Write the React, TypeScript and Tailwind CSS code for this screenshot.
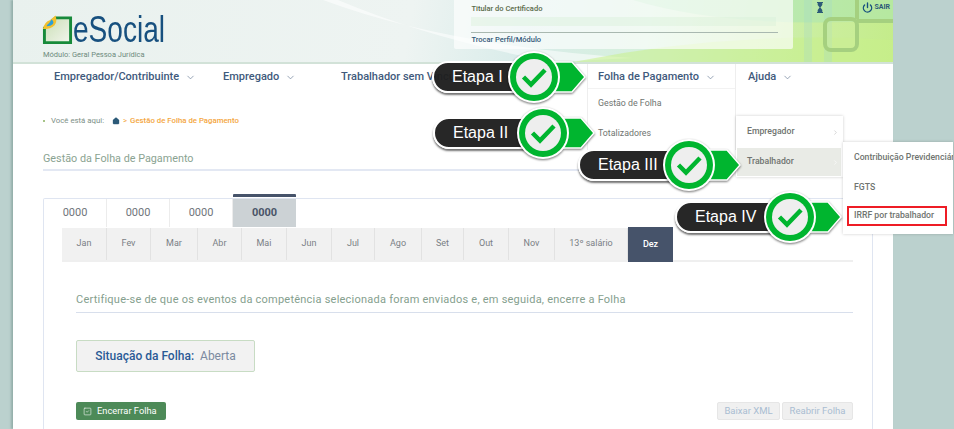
import React from 'react';
import { ChevronDown, ChevronRight, Power, House, SquareCheck } from 'lucide-react';

const roboto = 'font-["Roboto",sans-serif]';

const navItems = [
  { label: 'Empregador/Contribuinte', width: 'w-[169px]' },
  { label: 'Empregado', width: 'w-[118px]' },
  { label: 'Trabalhador sem Vínculo', width: 'w-[257px]' },
  { label: 'Folha de Pagamento', width: 'w-[150px]' },
  { label: 'Ajuda', width: 'w-[60px]' },
];

const years = ['0000', '0000', '0000'];
const months = [
  { label: 'Jan', width: 'w-[45px]' },
  { label: 'Fev', width: 'w-[44px]' },
  { label: 'Mar', width: 'w-[47px]' },
  { label: 'Abr', width: 'w-[44px]' },
  { label: 'Mai', width: 'w-[45px]' },
  { label: 'Jun', width: 'w-[45px]' },
  { label: 'Jul', width: 'w-[43px]' },
  { label: 'Ago', width: 'w-[47px]' },
  { label: 'Set', width: 'w-[42px]' },
  { label: 'Out', width: 'w-[45px]' },
  { label: 'Nov', width: 'w-[46px]' },
  { label: '13º salário', width: 'w-[73px]' },
];

function Logo() {
  return (
    <div className="flex items-end h-[30px]">
      <svg width="31" height="30" viewBox="0 0 32 30" className="shrink-0">
        <defs>
          <linearGradient id="sheet" x1="0" y1="0" x2="1" y2="1">
            <stop offset="0" stopColor="#c9deb4" />
            <stop offset="1" stopColor="#f2f6ee" />
          </linearGradient>
        </defs>
        <path d="M2.5 13 L14 2.5 H29.5 V28 H2.5 Z" fill="url(#sheet)" stroke="#178a3a" strokeWidth="3" />
        <path d="M1 14 Q3 6 8 5 L14 0 Q16 6 13 10 Q9 14 1 14 Z" fill="#f2c12e" />
        <path d="M5 10 Q8 8 10 4 Q13 7 11 9 Q9 11 5 11 Z" fill="#2b9fd8" />
      </svg>
      <span className='inline-block font-["Liberation_Sans",sans-serif] text-[#17507f] text-[36px] leading-[30px] scale-x-[0.78] origin-left'>eSocial</span>
    </div>
  );
}

// faixa preta com o selo verde de check e a seta apontando pro menu
function Callout({ label, pos, pillW }: { label: string; pos: string; pillW: string }) {
  return (
    <div className={`absolute ${pos} flex items-center h-[56px]`}>
      <div className={`${pillW} h-[32px] rounded-l-[16px] rounded-r-[4px] bg-[#1e1e1e]/[0.96] border-2 border-white shadow-[0_2px_2px_rgba(0,0,0,0.55)] flex items-center pl-[18px] font-["Liberation_Sans",sans-serif] text-white text-[16px] -mr-[16px] shrink-0`}>
        {label}
      </div>
      <svg width="78" height="56" viewBox="0 0 78 56" className="relative shrink-0 drop-shadow-[0_1px_1px_rgba(0,0,0,0.55)]">
        <path d="M38 13 L64 13 L77 28 L64 43 L38 43 Z" fill="#00b52f" stroke="#ffffff" strokeWidth="1.5" />
        <circle cx="26" cy="28" r="26" fill="#ffffff" />
        <circle cx="26" cy="28" r="24" fill="#00b52f" />
        <circle cx="26" cy="28" r="18" fill="#eeeeee" />
        <path d="M15.5 28 L23 35.5 L37 21" fill="none" stroke="#00b52f" strokeWidth="4.5" strokeLinejoin="miter" />
      </svg>
    </div>
  );
}

export default function App() {
  return (
    <div className={`${roboto} relative w-[954px] h-[429px] overflow-hidden bg-[#bbd1ce]`}>
      <div className="relative ml-[13px] w-[880px] h-[429px] bg-white shadow-[-2px_0_2px_rgba(120,150,145,0.6)]">
        {/* Header */}
        <header className="relative h-[64px] border-b-2 border-[#d2e2d8] overflow-hidden bg-[linear-gradient(100deg,#e9f1ee_0%,#eef4f2_45%,#d9ecea_58%,#d6f0dc_72%,#c9ee9a_92%,#c4ec8a_100%)] flex justify-between">
          <svg width="880" height="64" viewBox="0 0 880 64" className="absolute left-0 top-0">
            <path d="M310 0 Q430 45 620 58 L540 62 Q420 40 325 0 Z" fill="#ffffff" opacity="0.55" />
            <path d="M620 0 Q720 30 880 20 L880 0 Z" fill="#a7e3b4" opacity="0.5" />
            <path d="M560 62 Q720 30 880 40 L880 62 Z" fill="#c8f08a" opacity="0.55" />
            <path d="M795 0 L795 64 M815 0 L815 64" stroke="#9fd6d0" strokeWidth="8" opacity="0.25" />
            <rect x="812" y="19" width="32" height="31" rx="6" fill="#cfeea0" fillOpacity="0.35" stroke="#a5d07f" strokeWidth="4" />
            <path d="M844 21 H880 M844 0 V19" stroke="#a5d07f" strokeWidth="4" fill="none" />
          </svg>
          <div className="relative ml-[29px] mt-[15px] flex flex-col">
            <Logo />
            <span className="ml-[1px] mt-[6px] text-[7.5px] leading-[8px] text-[#6d8a7c]">Módulo: Geral Pessoa Jurídica</span>
          </div>
          <div className="relative flex items-start mr-[3px]">
            <div className="w-[339px] h-[49px] bg-white/65 rounded-b-[2px] px-[17px] pt-[4px] mr-[24px]">
              <p className="text-[7.5px] leading-[9px] font-medium text-[#5a6b4a]">Titular do Certificado</p>
              <div className="mt-[4px] h-[9px] bg-[#d8f0d8]/40" />
              <div className="mt-[6px] h-px w-[307px] bg-[#a9b8b0]" />
              <p className="mt-[2px] text-[7.5px] leading-[9px] font-medium text-[#345a7a]">Trocar Perfil/Módulo</p>
            </div>
            <svg width="6" height="11" viewBox="0 0 6 11" className="mt-[2px] mr-[39px]">
              <path d="M0 0.5 H6 M0 10.5 H6" stroke="#2c5a78" strokeWidth="1" />
              <path d="M0.7 1 H5.3 V3 L3.4 5.5 L5.3 8 V10 H0.7 V8 L2.6 5.5 L0.7 3 Z" fill="#2c5a78" />
            </svg>
            <div className="flex items-center mt-[2px] gap-[1px]">
              <Power size={11} strokeWidth={3} className="text-[#17507f]" />
              <span className="text-[7px] font-bold text-[#2c5a78]">SAIR</span>
            </div>
          </div>
        </header>

        {/* Nav */}
        <nav className="flex h-[27px] pl-[41px] items-center">
          {navItems.map((item) => (
            <div key={item.label} className={`${item.width} flex items-center gap-[6px] shrink-0 text-[11px] font-medium text-[#3f5a7c]`}>
              <span>{item.label}</span>
              <ChevronDown size={11} strokeWidth={1.5} className="text-[#6b7d96]" />
            </div>
          ))}
        </nav>

        {/* Breadcrumb */}
        <div className="flex items-center mt-[23px] pl-[30px] h-[14px] text-[7.8px]">
          <span className="w-[2px] h-[2px] rounded-full bg-[#8ab060]" />
          <span className="ml-[6px] text-[#7d8f86]">Você está aqui:</span>
          <House size={8} fill="#2c5a78" strokeWidth={1} className="ml-[8px] text-[#2c5a78]" />
          <span className="mx-[3px] text-[#f4a640]">&gt;</span>
          <span className="text-[#f4a640] font-medium">Gestão de Folha de Pagamento</span>
        </div>

        <div className="ml-[30px] mr-[20px] mt-[24px]">
          <h1 className="text-[10.8px] leading-[14px] text-[#8aa391]">Gestão da Folha de Pagamento</h1>
          <div className="mt-[3px] h-[2px] bg-[#e3e8f3]" />

          {/* Painel de competência */}
          <div className="relative mt-[27px] h-[300px] border border-b-0 border-[#dfe5f1] rounded-t-[2px]">
            <div className="flex h-[28px]">
              {years.map((y, i) => (
                <div key={i} className="w-[63px] flex items-center justify-center border-r border-[#ececec] text-[11px] text-[#70757a]">{y}</div>
              ))}
              <div className="relative w-[63px] flex items-center justify-center bg-[#ccd2d5] text-[11px] font-bold text-[#4a5568]">
                0000
                <div className="absolute -top-[5px] left-0 right-0 h-[3px] bg-[#46536a] rounded-t-[1px]" />
              </div>
            </div>

            <div className="ml-[18px] mr-[19px] mt-[1px] border-b-2 border-[#efefef] flex h-[34px]">
              {months.map((m) => (
                <div key={m.label} className={`${m.width} h-[32px] flex items-center justify-center bg-[#f1f1f1] border-r border-[#e2e2e2] text-[9px] text-[#7a7f85] shrink-0`}>{m.label}</div>
              ))}
              <div className="w-[45px] h-[35px] -mt-[1px] flex items-center justify-center bg-[#46536a] text-[9px] font-medium text-white shrink-0">Dez</div>
            </div>

            <div className="ml-[32px] mr-[19px] mt-[31px]">
              <p className="text-[11px] leading-[14px] text-[#85a08e] tracking-[0.23px]">Certifique-se de que os eventos da competência selecionada foram enviados e, em seguida, encerre a Folha</p>
              <div className="mt-[5px] h-px bg-[#d8dfec]" />

              <div className="mt-[27px] w-[179px] h-[32px] flex items-center justify-center gap-[6px] bg-[#f2f2f2] border border-[#c8dcc4] rounded-[2px] text-[12px]">
                <span className="font-medium text-[#2a5a96]">Situação da Folha:</span>
                <span className="text-[#7b8aa0]">Aberta</span>
              </div>

              <div className="mt-[30px] flex items-center justify-between">
                <button className="w-[90px] h-[18px] flex items-center pl-[7px] gap-[5px] bg-[#4d8a58] rounded-[2px] text-[9.3px] text-white">
                  <SquareCheck size={9} strokeWidth={1.5} />
                  Encerrar Folha
                </button>
                <div className="flex gap-[2px]">
                  <button className="w-[63px] h-[18px] bg-[#f0f0f0] border border-[#e6e6e6] rounded-[2px] text-[9.5px] text-[#a9bdd2]">Baixar XML</button>
                  <button className="w-[71px] h-[18px] bg-[#f0f0f0] border border-[#e6e6e6] rounded-[2px] text-[9.5px] text-[#a9bdd2]">Reabrir Folha</button>
                </div>
              </div>
            </div>
          </div>
        </div>

        {/* Menus abertos */}
        <div className="absolute left-[574px] top-[64px] w-[149px] h-[86px] border-x border-[#eeeeee] text-[8.8px] text-[#6f7470]">
          <div className="h-[25px] border-b border-[#f2f2f2]" />
          <div className="pl-[10px] pt-[8px] leading-[12px]">Gestão de Folha</div>
          <div className="pl-[10px] pt-[18px] leading-[12px]">Totalizadores</div>
        </div>
        <div className="absolute left-[723px] top-[116px] w-[107px] h-[61px] bg-white shadow-[0_0_3px_rgba(0,0,0,0.2)] text-[8.7px] font-medium text-[#6f7470] flex flex-col">
          <div className="h-[32px] pl-[11px] pr-[4px] flex items-center justify-between">Empregador <ChevronRight size={7} strokeWidth={2} className="text-[#bbbbbb]" /></div>
          <div className="h-[28px] ml-px mr-[2px] pl-[10px] pr-[2px] flex items-center justify-between bg-[#e9ebe6]">Trabalhador <ChevronRight size={7} strokeWidth={2} className="text-white" /></div>
        </div>
        <div className="absolute left-[830px] top-[142px] w-[110px] h-[92px] bg-white shadow-[0_0_3px_rgba(0,0,0,0.2)] text-[8.7px] text-[#6f7470] font-medium overflow-hidden whitespace-nowrap">
          <div className="pl-[11px] pt-[9px] leading-[12px]">Contribuição Previdenciária</div>
          <div className="pl-[11px] pt-[18px] leading-[12px]">FGTS</div>
          <div className="ml-[4px] mt-[13px] w-[100px] h-[20px] border-2 border-[#ee1c25] flex items-center pl-[5px]">IRRF por trabalhador</div>
        </div>
      </div>

      <Callout label="Etapa I" pos="left-[432px] top-[49px]" pillW="w-[92px]" />
      <Callout label="Etapa II" pos="left-[433px] top-[105px]" pillW="w-[100px]" />
      <Callout label="Etapa III" pos="left-[578px] top-[137px]" pillW="w-[101px]" />
      <Callout label="Etapa IV" pos="left-[675px] top-[189px]" pillW="w-[105px]" />
    </div>
  );
}
